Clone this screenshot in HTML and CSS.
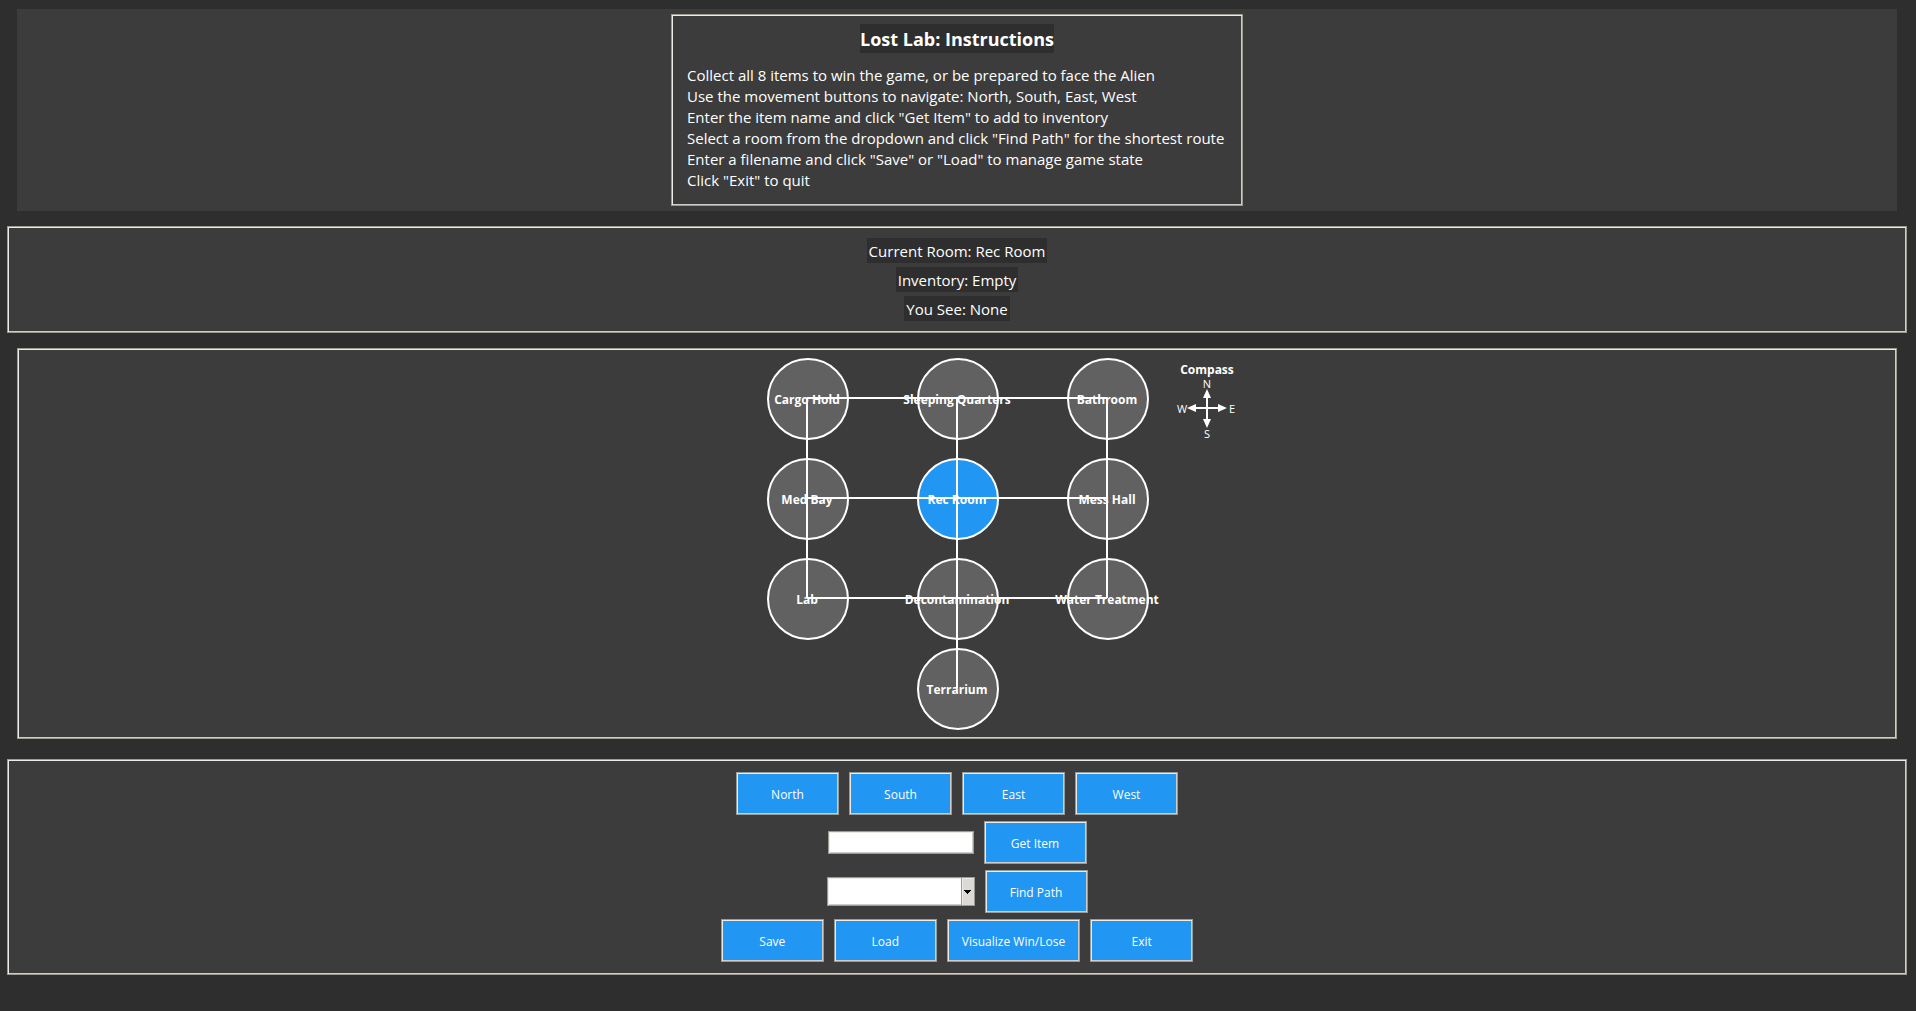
FILE: index.html
```html
<!DOCTYPE html>
<html lang="en">
<head>
<meta charset="utf-8">
<title>Lost Lab</title>
<link rel="stylesheet" href="styles.css">
</head>
<body>
<main class="app">
  <section class="intro">
    <div class="intro-card frame">
      <h1 class="intro-title">Lost Lab: Instructions</h1>
      <div class="intro-text">
        <p>Collect all 8 items to win the game, or be prepared to face the Alien</p>
        <p>Use the movement buttons to navigate: North, South, East, West</p>
        <p>Enter the item name and click "Get Item" to add to inventory</p>
        <p>Select a room from the dropdown and click "Find Path" for the shortest route</p>
        <p>Enter a filename and click "Save" or "Load" to manage game state</p>
        <p>Click "Exit" to quit</p>
      </div>
    </div>
  </section>

  <section class="status frame">
    <p class="status-line">Current Room: Rec Room</p>
    <p class="status-line">Inventory: Empty</p>
    <p class="status-line">You See: None</p>
  </section>

  <section class="map frame">
    <svg class="map-drawing" width="600" height="387" viewBox="0 0 600 387" role="img" aria-label="Map of the lab">
      <g class="room">
        <circle cx="151" cy="49" r="40"/>
        <circle cx="301" cy="49" r="40"/>
        <circle cx="451" cy="49" r="40"/>
        <circle cx="151" cy="149" r="40"/>
        <circle class="room-current" cx="301" cy="149" r="40"/>
        <circle cx="451" cy="149" r="40"/>
        <circle cx="151" cy="249" r="40"/>
        <circle cx="301" cy="249" r="40"/>
        <circle cx="451" cy="249" r="40"/>
        <circle cx="301" cy="339" r="40"/>
      </g>
      <path class="link" d="M150 48H450M150 148H450M150 248H450M150 48V248M300 48V338M450 48V248"/>
      <g class="room-name">
        <text x="150" y="54">Cargo Hold</text>
        <text x="300" y="54">Sleeping Quarters</text>
        <text x="450" y="54">Bathroom</text>
        <text x="150" y="154">Med Bay</text>
        <text x="300" y="154">Rec Room</text>
        <text x="450" y="154">Mess Hall</text>
        <text x="150" y="254">Lab</text>
        <text x="300" y="254">Decontamination</text>
        <text x="450" y="254">Water Treatment</text>
        <text x="300" y="344">Terrarium</text>
        <text x="550" y="24">Compass</text>
      </g>
      <path class="link" d="M550 44V74M535 58H565"/>
      <path class="arrow" d="M550 39L554 48H546ZM550 78L554 69H546ZM530 58L539 54V62ZM570 58L561 54V62Z"/>
      <g class="compass-point">
        <text x="550" y="38">N</text>
        <text x="550" y="88">S</text>
        <text x="525" y="63">W</text>
        <text x="575" y="63">E</text>
      </g>
    </svg>
  </section>

  <section class="controls frame">
    <div class="row">
      <button class="btn frame" type="button">North</button>
      <button class="btn frame" type="button">South</button>
      <button class="btn frame" type="button">East</button>
      <button class="btn frame" type="button">West</button>
    </div>
    <form class="row">
      <input class="field frame" type="text" aria-label="Item name">
      <button class="btn frame" type="button">Get Item</button>
    </form>
    <form class="row">
      <span class="picker">
        <select class="picker-select frame" aria-label="Room">
          <option></option>
          <option>Cargo Hold</option>
          <option>Sleeping Quarters</option>
          <option>Bathroom</option>
          <option>Med Bay</option>
          <option>Rec Room</option>
          <option>Mess Hall</option>
          <option>Lab</option>
          <option>Decontamination</option>
          <option>Water Treatment</option>
          <option>Terrarium</option>
        </select>
        <span class="picker-arrow"><svg width="7" height="4" viewBox="0 0 7 4" aria-hidden="true"><path d="M0 0H7V1H6V2H5V3H4V4H3V3H2V2H1V1H0Z"/></svg></span>
      </span>
      <button class="btn frame" type="button">Find Path</button>
    </form>
    <div class="row">
      <button class="btn frame" type="button">Save</button>
      <button class="btn frame" type="button">Load</button>
      <button class="btn frame" type="button">Visualize Win/Lose</button>
      <button class="btn frame" type="button">Exit</button>
    </div>
  </section>
</main>
</body>
</html>
```
FILE: styles.css
```css
* {
  box-sizing: border-box;
}

body {
  margin: 0;
  min-height: 100vh;
  background: #2e2e2e;
  color: #fff;
  font: 15px/21px "Open Sans", "Noto Sans", sans-serif;
}

h1,
p {
  margin: 0;
}

.app {
  padding: 9px 9px 36px 7px;
}

/* Etched frame: grey outline with a light edge inside it */
.frame {
  border: 1px solid #9e9a91;
  box-shadow: inset 1px 1px #eeebe7, inset -1px -1px #cfcdc8;
}

.intro,
.status,
.map,
.controls {
  display: flex;
  background: #3c3c3c;
}

.intro {
  justify-content: center;
  margin: 0 10px;
  padding: 5px;
}

.intro-card {
  display: flex;
  flex-direction: column;
  align-items: center;
  gap: 12px;
  width: 572px;
  padding: 9px 15px 14px;
}

.intro-title {
  padding: 2px 0 0;
  background: #2e2e2e;
  font-size: 18px;
  line-height: 27px;
}

.intro-text {
  align-self: stretch;
}

.status {
  flex-direction: column;
  align-items: center;
  gap: 4px;
  margin-top: 15px;
  padding: 11px;
}

.status-line {
  padding: 2px 2px 0;
  background: #2e2e2e;
  line-height: 23px;
}

.map {
  justify-content: center;
  margin: 15px 10px 20px;
  padding: 1px;
}

.map-drawing {
  display: block;
}

.room {
  fill: #616161;
  stroke: #fff;
  stroke-width: 2px;
}

.room-current {
  fill: #2196f3;
}

.link {
  fill: none;
  stroke: #fff;
  stroke-width: 2px;
}

.arrow {
  fill: #fff;
}

.room-name,
.compass-point {
  fill: #fff;
  text-anchor: middle;
}

.room-name {
  font-size: 12px;
  font-weight: 700;
}

.compass-point {
  font-size: 11px;
}

.controls {
  flex-direction: column;
  gap: 6px;
  padding: 12px;
}

.row {
  display: flex;
  justify-content: center;
  align-items: center;
  gap: 10px;
}

.btn {
  min-width: 103px;
  height: 43px;
  padding: 2px 14px 0;
  background: #2196f3;
  color: #fff;
  font: 12px "Open Sans", "Noto Sans", sans-serif;
}

.field {
  width: 146px;
  height: 23px;
  padding: 0 4px;
  background: #fff;
}

.picker {
  display: grid;
  width: 148px;
  height: 29px;
}

.picker-select {
  grid-area: 1 / 1;
  appearance: none;
  padding: 0 18px 0 4px;
  border-radius: 0;
  background: #fff;
}

.picker-arrow {
  display: flex;
  grid-area: 1 / 1;
  justify-self: end;
  justify-content: center;
  align-items: center;
  width: 14px;
  border: 1px solid #9e9a91;
  background: #dcdad5;
  box-shadow: inset 1px 1px #eeebe7;
  pointer-events: none;
}
```
